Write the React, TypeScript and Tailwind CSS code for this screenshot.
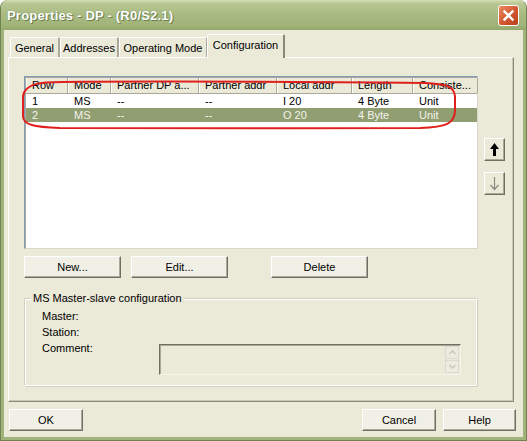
import React from "react";

const columns = [
  { label: "Row", w: "w-[42px]" },
  { label: "Mode", w: "w-[43px]" },
  { label: "Partner DP a...", w: "w-[88px]" },
  { label: "Partner addr", w: "w-[78px]" },
  { label: "Local addr", w: "w-[75px]" },
  { label: "Length", w: "w-[61px]" },
  { label: "Consiste...", w: "w-[65px]" },
];

const rows = [
  { cells: ["1", "MS", "--", "--", "I 20", "4 Byte", "Unit"], selected: false },
  { cells: ["2", "MS", "--", "--", "O 20", "4 Byte", "Unit"], selected: true },
];

function XpButton({ label, className = "" }: { label: string; className?: string }) {
  return (
    <button
      className={`h-[22px] flex items-center justify-center bg-[#f1f0e6] border border-t-white border-l-white border-r-[#716f64] border-b-[#716f64] shadow-[inset_-1px_-1px_0_#aca899] ${className}`}
    >
      {label}
    </button>
  );
}

function Tab({ label, active = false, w }: { label: string; active?: boolean; w: string }) {
  if (active) {
    return (
      <div
        className={`${w} h-[24px] -mb-[1px] relative z-10 bg-[#ebe9d8] border-t border-l border-white border-r-2 border-r-[#8a8878] rounded-t-[2px] flex items-start justify-center pt-[4px]`}
      >
        {label}
      </div>
    );
  }
  return (
    <div
      className={`${w} h-[20px] bg-[#ebe9d8] border-t border-l border-white border-r-2 border-r-[#aca899] rounded-t-[2px] flex items-center justify-center pt-[1px]`}
    >
      {label}
    </div>
  );
}

export default function App() {
  return (
    <div className="relative w-[527px] h-[441px] text-[11px] leading-[13px] text-black font-['Liberation_Sans',Arial,sans-serif]">
      <div className="flex flex-col w-full h-full rounded-t-[8px] overflow-hidden bg-[#9fb37a] border-l border-r border-b border-[#6f8450]">
        {/* title bar */}
        <div className="h-[30px] flex items-center pl-[6px] pr-[4px] bg-[linear-gradient(#d5dfb4_0%,#b8c794_12%,#a8ba80_50%,#a0b378_85%,#93a86c_100%)]">
          <span className="flex-1 font-bold text-[13px] text-white [text-shadow:1px_1px_0_#6f7f4c,0_0_1px_#6f7f4c] tracking-[0.2px]">
            Properties - DP - (R0/S2.1)
          </span>
          <div className="w-[21px] h-[21px] rounded-[3px] border border-white bg-[linear-gradient(135deg,#eb8a62,#d2562f_55%,#b5401c)] flex items-center justify-center mr-[3px]">
            <svg width="13" height="13" viewBox="0 0 13 13">
              <path d="M2.5 2.5 L10.5 10.5 M10.5 2.5 L2.5 10.5" stroke="white" strokeWidth="2.4" strokeLinecap="square" />
            </svg>
          </div>
        </div>

        {/* body */}
        <div className="flex-1 flex flex-col ml-[3px] mr-[3px] mb-[3px] bg-[#ebe9d8]">
          {/* tabs */}
          <div className="flex items-end ml-[6px] mt-[3px] h-[24px]">
            <Tab label="General" w="w-[50px]" />
            <Tab label="Addresses" w="w-[59px]" />
            <Tab label="Operating Mode" w="w-[89px]" />
            <Tab label="Configuration" w="w-[78px] -ml-[1px]" active />
          </div>

          {/* tab panel */}
          <div className="ml-[4px] w-[506px] h-[345px] border border-t-white border-l-white border-r-[#8a8878] border-b-[#8a8878] shadow-[inset_-1px_-1px_0_#c9c6b4] pl-[15px] pt-[18px] flex flex-col">
            <div className="flex">
              {/* list */}
              <div className="w-[454px] h-[173px] bg-white border border-t-[#7f9db9] border-l-[#7f9db9] border-r-[#d9d7c9] border-b-[#d9d7c9] shadow-[inset_1px_1px_0_#aca899]">
                <div className="flex h-[16px] mt-[1px] ml-[1px] bg-[#ebe9d8] border-b border-[#aca899]">
                  {columns.map((c) => (
                    <div
                      key={c.label}
                      className={`${c.w} shrink-0 pl-[6px] flex items-center border-r border-[#aca899] shadow-[inset_1px_0_0_white] whitespace-nowrap overflow-hidden`}
                    >
                      {c.label}
                    </div>
                  ))}
                </div>
                {rows.map((r) => (
                  <div
                    key={r.cells[0]}
                    className={`flex h-[14px] ml-[1px] items-center ${r.selected ? "bg-[#909e72] text-[#f4f4ec]" : ""}`}
                  >
                    {r.cells.map((cell, i) => (
                      <div key={i} className={`${columns[i].w} shrink-0 pl-[6px] whitespace-nowrap`}>
                        {cell}
                      </div>
                    ))}
                  </div>
                ))}
              </div>

              {/* up/down */}
              <div className="flex flex-col ml-[6px] pt-[62px] gap-[11px]">
                <div className="w-[21px] h-[23px] bg-[#ebe9d8] border border-t-white border-l-white border-r-[#716f64] border-b-[#716f64] shadow-[inset_-1px_-1px_0_#aca899] flex items-center justify-center">
                  <svg width="11" height="15" viewBox="0 0 11 15">
                    <path d="M5.5 1 L10 7 L7 7 L7 14 L4 14 L4 7 L1 7 Z" fill="#000" />
                  </svg>
                </div>
                <div className="w-[21px] h-[23px] bg-[#ebe9d8] border border-t-white border-l-white border-r-[#716f64] border-b-[#716f64] shadow-[inset_-1px_-1px_0_#aca899] flex items-center justify-center">
                  <svg width="11" height="15" viewBox="0 0 11 15">
                    <path d="M5.5 1 L5.5 13 M1.5 9 L5.5 13.5 L9.5 9" stroke="#8a8a80" strokeWidth="1.2" fill="none" />
                  </svg>
                </div>
              </div>
            </div>

            {/* action buttons */}
            <div className="flex mt-[7px]">
              <XpButton label="New..." className="w-[97px]" />
              <XpButton label="Edit..." className="w-[97px] ml-[10px]" />
              <XpButton label="Delete" className="w-[97px] ml-[43px]" />
            </div>

            {/* group box */}
            <div className="relative mt-[20px] w-[453px] h-[88px] border border-t-[#d0d0bf] border-l-[#d0d0bf] border-r-white border-b-white shadow-[inset_1px_1px_0_white,1px_1px_0_#d0d0bf] rounded-[2px] pl-[17px] pt-[9px]">
              <span className="absolute -top-[7px] left-[6px] px-[2px] bg-[#ebe9d8]">MS Master-slave configuration</span>
              <div className="h-[16px] flex items-center">Master:</div>
              <div className="h-[16px] flex items-center">Station:</div>
              <div className="flex">
                <div className="w-[117px] h-[16px] flex items-center">Comment:</div>
                <div className="mt-[4px] w-[302px] h-[31px] border border-t-[#716f64] border-l-[#716f64] border-r-[#f5f4ea] border-b-[#f5f4ea] shadow-[inset_1px_1px_0_#aca899] flex justify-end pr-[1px] pt-[1px]">
                  <div className="flex flex-col gap-[1px]">
                    <div className="w-[14px] h-[13px] border border-[#dcdace] bg-[#ecebe0] flex items-center justify-center">
                      <svg width="7" height="5" viewBox="0 0 7 5">
                        <path d="M0.5 4 L3.5 1 L6.5 4" stroke="#c8c6b8" strokeWidth="1.3" fill="none" />
                      </svg>
                    </div>
                    <div className="w-[14px] h-[13px] border border-[#dcdace] bg-[#ecebe0] flex items-center justify-center">
                      <svg width="7" height="5" viewBox="0 0 7 5">
                        <path d="M0.5 1 L3.5 4 L6.5 1" stroke="#c8c6b8" strokeWidth="1.3" fill="none" />
                      </svg>
                    </div>
                  </div>
                </div>
              </div>
            </div>
          </div>

          {/* dialog buttons */}
          <div className="flex mt-[7px] ml-[5px] mr-[7px]">
            <XpButton label="OK" className="w-[74px]" />
            <div className="flex-1" />
            <XpButton label="Cancel" className="w-[74px]" />
            <XpButton label="Help" className="w-[73px] ml-[7px]" />
          </div>
        </div>
      </div>

      {/* red hand-drawn mark over the list */}
      <svg className="absolute left-0 top-0 pointer-events-none" width="527" height="441" viewBox="0 0 527 441">
        <path
          d="M62 82 C 42 82, 25 83, 23 96 L 23 116 C 23 125, 34 127, 60 128 C 150 129, 300 128, 420 128 C 446 127, 455 124, 455 110 L 455 96 C 454 86, 446 84, 425 83 C 320 82, 180 81, 62 82 Z"
          stroke="#e0201c"
          strokeWidth="2"
          fill="none"
        />
      </svg>
    </div>
  );
}
